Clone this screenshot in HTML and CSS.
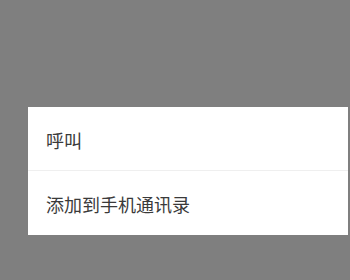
FILE: index.html
```html
<!DOCTYPE html>
<html lang="zh">
<head>
<meta charset="utf-8">
<link rel="stylesheet" href="styles.css">
</head>
<body>
<div class="mask">
  <div class="sheet">
    <div class="item item-first">呼叫</div>
    <div class="item">添加到手机通讯录</div>
  </div>
</div>
</body>
</html>
```
FILE: styles.css
```css
html, body {
  margin: 0;
  padding: 0;
  width: 350px;
  height: 280px;
  overflow: hidden;
}
.mask {
  box-sizing: border-box;
  width: 350px;
  height: 280px;
  background: #7f7f7f;
  padding: 107px 0 0 28px;
}
.sheet {
  width: 320px;
  background: #ffffff;
  display: flex;
  flex-direction: column;
}
.item {
  box-sizing: border-box;
  height: 64px;
  padding: 2px 0 0 18px;
  display: flex;
  align-items: center;
  font-family: "Noto Sans CJK SC", "Noto Sans", sans-serif;
  font-size: 18px;
  color: #3a3a3a;
}
.item-first {
  border-bottom: 1px solid #efefef;
}
```
